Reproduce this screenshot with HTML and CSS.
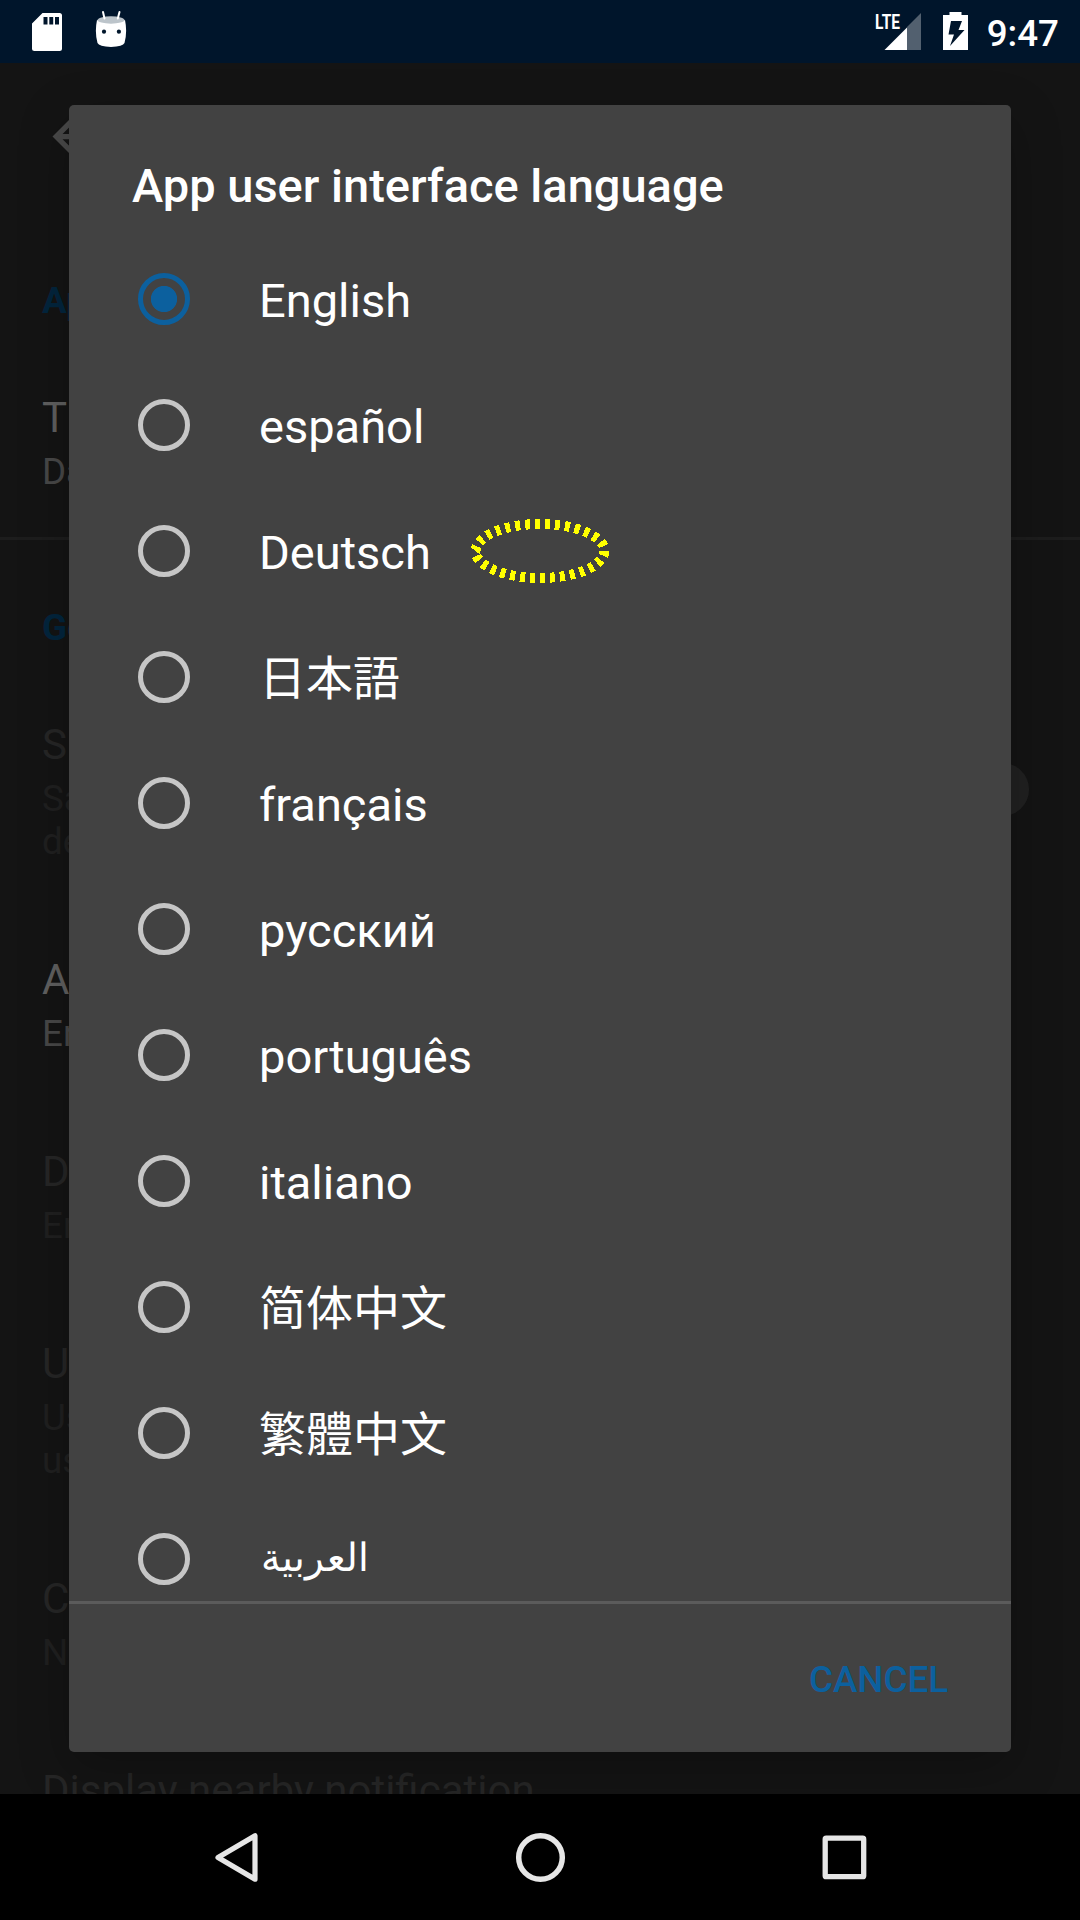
FILE: index.html
```html
<!DOCTYPE html>
<html lang="en">
<head>
<meta charset="utf-8">
<title>Settings</title>
<link rel="stylesheet" href="styles.css">
</head>
<body>
<div class="screen">
  <header class="status-bar">
    <div class="status-left">
      <svg class="icon-sd" width="32" height="40" viewBox="0 0 32 40"><path fill="#fff" fill-rule="evenodd" d="M11.5 1H28.5Q31 1 31 3.500V36.500Q31 39 28.500 39H3.500Q1 39 1 36.500V11.500ZM12.500 5V12.500H16.500V5ZM18.300 5V12.500H22.200V5ZM24 5V12.500H28V5Z"/></svg>
      <svg class="icon-droid" width="32" height="38" viewBox="0 0 32 38"><path fill="#fff" d="M2 10Q16 16 30 10Q32.500 22 29.500 33Q28 36.600 16 37Q4 36.600 2.500 33Q-.5 22 2 10Z"/><ellipse cx="16" cy="10" rx="13.500" ry="3.700" fill="#bcc4ca"/><path d="M8 2L9.500 8.500M24.500 2L22.800 8.500" stroke="#fff" stroke-width="2" stroke-linecap="round"/><circle cx="9" cy="21.700" r="2.100" fill="#00162b"/><circle cx="23.900" cy="21.700" r="2.100" fill="#00162b"/></svg>
    </div>
    <div class="status-right">
      <svg width="46" height="38" viewBox="0 0 46 38"><path fill="#52606f" d="M46 1V38H32V15Z"/><path fill="#fff" d="M9.500 38L32 15.500V38Z"/><text class="lte" x="0" y="17" textLength="25" lengthAdjust="spacingAndGlyphs">LTE</text></svg>
      <svg class="icon-battery" width="25" height="38" viewBox="0 0 25 38"><path fill="#fff" fill-rule="evenodd" d="M0 3H6.500V0H18.500V3H25V38H0ZM8 9L5.500 22.500H11L7 34L21.500 18H15.500L19 9Z"/></svg>
      <span class="clock">9:47</span>
    </div>
  </header>

  <main class="settings">
    <div class="toolbar">
      <svg width="63" height="63" viewBox="0 0 24 24"><path fill="#494949" d="M20 11H7.830l5.590-5.590L12 4l-8 8 8 8 1.410-1.410L7.830 13H20z"/></svg>
    </div>
    <section class="group">
      <h2 class="group-title">Ap</h2>
      <div class="pref"><div class="pref-title">T</div><div class="pref-summary">Da</div></div>
    </section>
    <section class="group">
      <h2 class="group-title">Ge</h2>
      <div class="pref off with-switch">
        <div><div class="pref-title">S</div><div class="pref-summary">Sa<br>de</div></div>
        <span class="thumb"></span>
      </div>
      <div class="pref"><div class="pref-title">A</div><div class="pref-summary">En</div></div>
      <div class="pref off"><div class="pref-title">D</div><div class="pref-summary">En</div></div>
      <div class="pref off"><div class="pref-title">U</div><div class="pref-summary">Us<br>us</div></div>
      <div class="pref off"><div class="pref-title">C</div><div class="pref-summary">N</div></div>
      <div class="pref off"><div class="pref-title">Display nearby notification</div></div>
    </section>
  </main>

  <div class="dialog" role="dialog">
    <h1 class="dialog-title">App user interface language</h1>
    <ul class="options">
      <li class="option selected"><span class="radio"></span><span class="label">English</span></li>
      <li class="option"><span class="radio"></span><span class="label">español</span></li>
      <li class="option"><span class="radio"></span><span class="label">Deutsch</span>
        <svg class="marker" width="140" height="66" viewBox="0 0 140 66"><ellipse cx="70" cy="33" rx="64.500" ry="27" pathLength="300"/></svg></li>
      <li class="option"><span class="radio"></span><span class="label" lang="ja">日本語</span></li>
      <li class="option"><span class="radio"></span><span class="label">français</span></li>
      <li class="option"><span class="radio"></span><span class="label">русский</span></li>
      <li class="option"><span class="radio"></span><span class="label">português</span></li>
      <li class="option"><span class="radio"></span><span class="label">italiano</span></li>
      <li class="option"><span class="radio"></span><span class="label" lang="zh-Hans">简体中文</span></li>
      <li class="option"><span class="radio"></span><span class="label" lang="zh-Hant">繁體中文</span></li>
      <li class="option"><span class="radio"></span><span class="label" lang="ar">العربية</span></li>
    </ul>
    <div class="actions"><button class="cancel">CANCEL</button></div>
  </div>

  <nav class="nav-bar">
    <svg width="63" height="63" viewBox="0 0 63 63"><path d="M13 31.500L50 9.800V53.200Z" fill="none" stroke="#e6e6e6" stroke-width="5.200" stroke-linejoin="round"/></svg>
    <svg width="63" height="63" viewBox="0 0 63 63"><circle cx="31.500" cy="31.500" r="21.800" fill="none" stroke="#e6e6e6" stroke-width="5.500"/></svg>
    <svg width="63" height="63" viewBox="0 0 63 63"><rect x="12.200" y="12.200" width="38.500" height="38.500" rx="1" fill="none" stroke="#e6e6e6" stroke-width="5.300" stroke-linejoin="round"/></svg>
  </nav>
</div>
</body>
</html>
```
FILE: styles.css
```css
* { box-sizing: border-box; }
body { margin: 0; background: #000; font-family: Roboto, "Noto Sans", sans-serif; }
svg { display: block; flex: none; }
h1, h2, ul { margin: 0; padding: 0; }

.screen {
  position: relative;
  display: flex;
  flex-direction: column;
  width: 1080px;
  height: 1920px;
  overflow: hidden;
}

/* Status bar */
.status-bar {
  display: flex;
  justify-content: space-between;
  flex: none;
  height: 63px;
  padding: 0 21px 0 31px;
  background: #00152b;
}
.status-left, .status-right { display: flex; align-items: flex-start; padding-top: 12px; }
.status-left { gap: 32px; }
.icon-droid { margin-top: -2px; }
.lte { font: bold 21px Roboto, sans-serif; fill: #fff; }
.icon-battery { margin: 0 19px 0 22px; }
.clock { color: #fff; font-size: 36.75px; font-weight: 500; line-height: 43px; }

/* Settings list behind the dialog */
.settings { flex: 1; overflow: hidden; min-height: 0; background: #141414; }
.toolbar { display: flex; align-items: center; height: 147px; padding-left: 42px; }
.group { padding: 69px 42px 0; }
.group + .group { margin-top: 44px; padding-top: 66px; border-top: 3px solid #1d1d1d; }
.group-title { color: #03253d; font-size: 36.75px; font-weight: 700; line-height: 43px; }
.pref { margin-top: 92px; }
.group-title + .pref { margin-top: 71px; }
.pref-title { color: #606060; font-size: 42px; line-height: 49px; }
.pref-summary { margin-top: 8px; color: #484848; font-size: 36.75px; line-height: 43px; }
.off .pref-title { color: #262626; }
.off .pref-summary { color: #202020; }
.with-switch { display: flex; justify-content: space-between; align-items: center; }
.thumb { width: 53px; height: 53px; margin: -5px 9px 0 0; border-radius: 50%; background: #212121; }

/* Language dialog */
.dialog {
  position: absolute;
  left: 69px;
  top: 105px;
  display: flex;
  flex-direction: column;
  width: 942px;
  height: 1647px;
  border-radius: 5px;
  background: #424242;
  box-shadow: 0 16px 50px rgba(0, 0, 0, .25);
}
.dialog-title {
  flex: none;
  height: 131px;
  padding: 53px 63px 0;
  color: #fff;
  font-size: 47px;
  font-weight: 500;
  line-height: 56px;
}
.options {
  height: 1365px;
  flex: none;
  overflow: hidden;
  list-style: none;
}
.option { display: flex; align-items: center; height: 126px; padding-left: 69px; }
.radio {
  flex: none;
  width: 52px;
  height: 52px;
  margin-right: 69px;
  border: 5px solid #c6c6c6;
  border-radius: 50%;
}
.selected .radio {
  border-color: #0c609e;
  background: radial-gradient(circle, #0c609e 12.700px, transparent 13.500px);
}
.label { padding-top: 4px; color: #fff; font-size: 47px; line-height: 56px; white-space: nowrap; }
.label:lang(ja), .label:lang(zh-Hans), .label:lang(zh-Hant) { padding: 0 0 4px; }
.label:lang(ja) { font-family: "Noto Sans CJK JP", sans-serif; }
.label:lang(zh-Hans) { font-family: "Noto Sans CJK SC", sans-serif; }
.label:lang(zh-Hant) { font-family: "Noto Sans CJK TC", sans-serif; }
.label:lang(ar) { padding: 0 0 2px 2px; font-size: 39px; }
.marker { margin-left: 39px; }
.marker ellipse {
  fill: none;
  stroke: #ff0;
  stroke-width: 10;
  stroke-dasharray: 5 5;
  shape-rendering: crispEdges;
}
.actions {
  display: flex;
  flex: 1;
  justify-content: flex-end;
  align-items: center;
  padding: 3px 63px 0 0;
  border-top: 3px solid #5b5b5b;
}
.cancel {
  padding: 0;
  border: 0;
  background: none;
  color: #0c609e;
  font: 500 36.75px/43px Roboto, sans-serif;
}

/* Navigation bar */
.nav-bar {
  display: grid;
  grid-template-columns: repeat(3, 304px);
  justify-content: center;
  place-items: center;
  flex: none;
  height: 126px;
  background: #000;
}
```
